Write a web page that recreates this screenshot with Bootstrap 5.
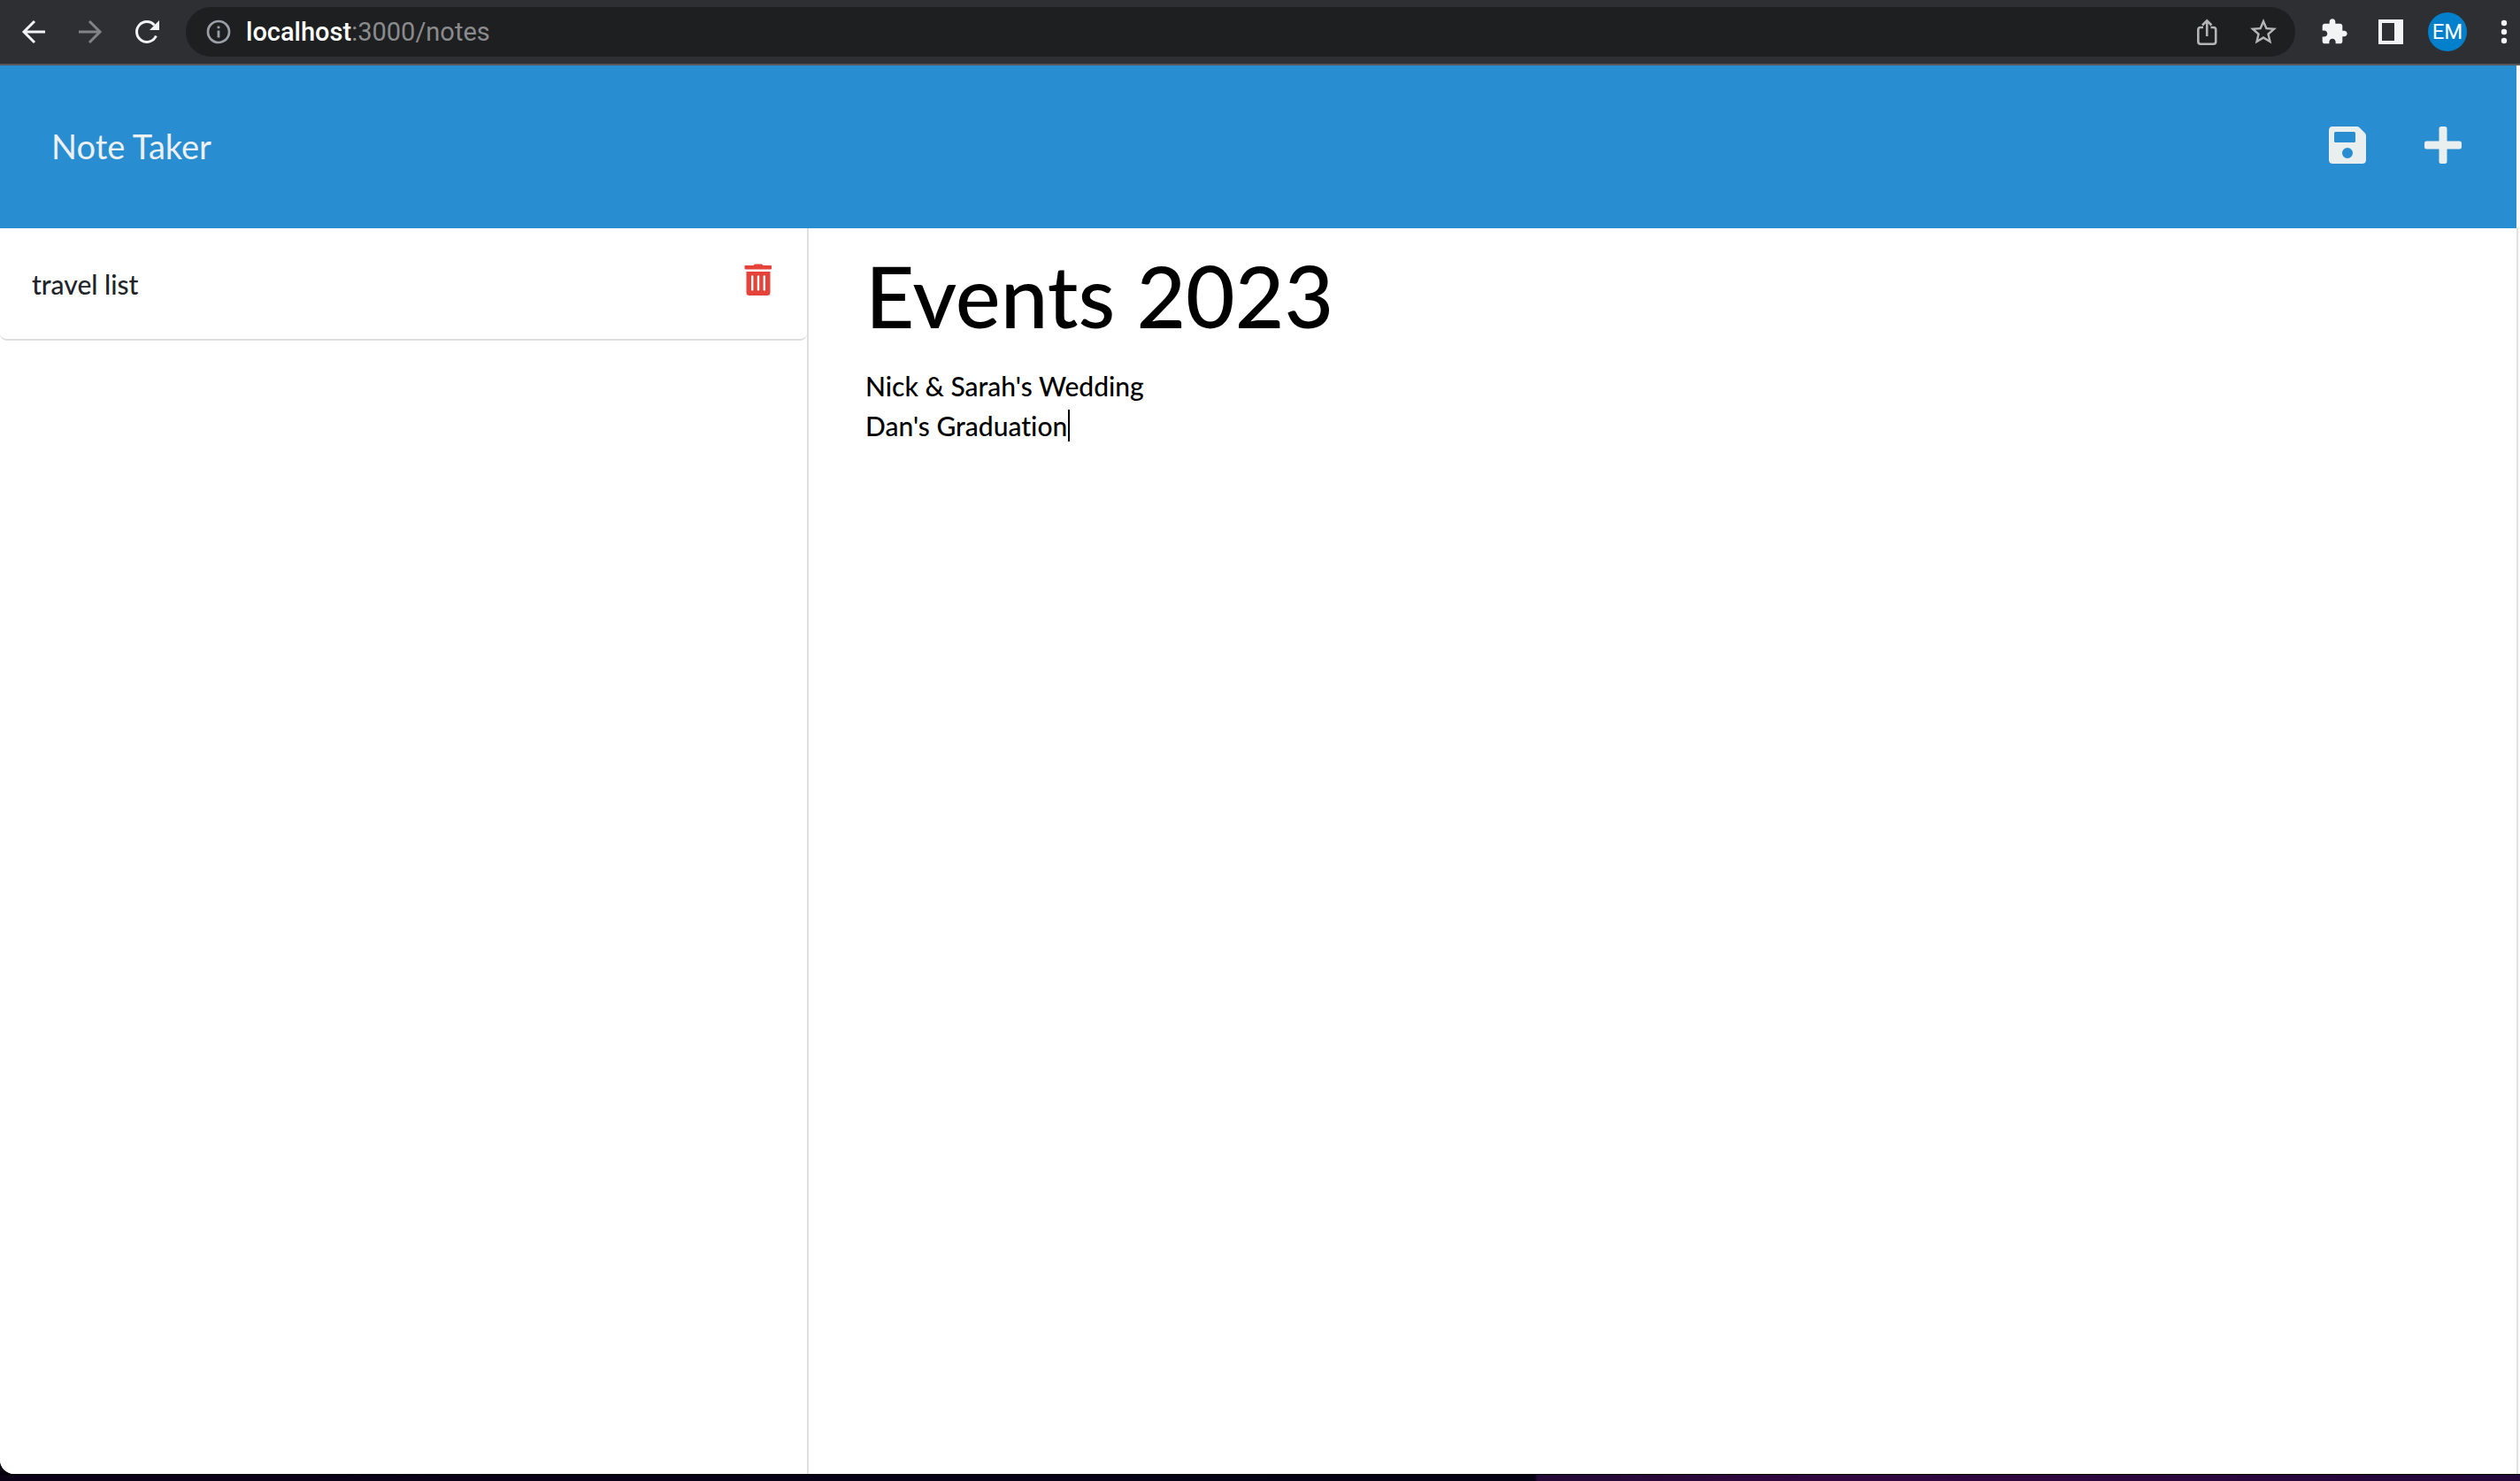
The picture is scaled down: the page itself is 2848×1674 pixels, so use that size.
<!DOCTYPE html>
<html lang="en">
<head>
<meta charset="utf-8">
<meta name="viewport" content="width=device-width, initial-scale=1">
<title>Note Taker</title>
<link rel="stylesheet" href="https://cdn.jsdelivr.net/npm/bootstrap@5.3.0/dist/css/bootstrap.min.css">
<style>
  body { font-family: Lato, "Liberation Sans", sans-serif; font-size: 30px; font-weight: 500; font-variant-ligatures: none; background: #fff; }
  svg { display: block; }
  .tool-bar { height: 74px; background: #2e2f33; border-bottom: 2px solid #58585b; padding-left: 6px; }
  .tool-btn { width: 64px; height: 64px; padding: 0; border: 0; background: none; display: flex; align-items: center; justify-content: center; color: #f1f3f4; }
  .tool-btn.dim { color: #828386; }
  .tool-btn.edge { width: 48px; margin-right: 2px; justify-content: flex-end; }
  .address { height: 56px; margin: 0 12px; padding: 0 4px 0 22px; border-radius: 28px; background: #1e1f21; color: #9aa0a6; font-family: Roboto, sans-serif; font-size: 29px; font-weight: 400; line-height: 56px; }
  .address .tool-btn { color: #b5b5b7; height: 56px; }
  .address a { color: #8a8b8d; text-decoration: none; margin-left: 16px; }
  .address strong { color: #fff; font-weight: 500; }
  .avatar { width: 44px; height: 44px; border-radius: 50%; background: #0280cb; color: #fff; font: 24px/44px Roboto, sans-serif; }
  .viewport-area { background: #08020f; }
  .page-area { background: #fff; border-right: 2px solid #e1e1e1; margin-right: 2px; }
  .gutter-bg { background: #fafafa; border-bottom-left-radius: 16px; overflow: hidden; }
  .masthead { height: 184px; background: #298dd2; padding: 0 41px 4px 58px; margin-right: -2px; border-right: 2px solid #fafafa; }
  .masthead .navbar-brand { color: #ecf0f1; font-size: 38px; font-weight: 400; margin: 2px 0 0; padding: 0; }
  .mast-btn { color: #e9eeef; border: 0; background: none; padding: 0 20px; }
  .mast-actions { gap: 24px; }
  .note-list { width: calc(32% + 4px); flex: none; border-right: 2px solid #dfdfdf; }
  .note-list .list-group-item { border: 0; border-bottom: 2px solid #dfdfdf; border-radius: 0 0 8px 8px; height: 127px; padding: 40px 39px 0 36px; line-height: 46px; color: #212529; }
  .note-btn { border: 0; background: none; padding: 0; color: #e54339; }
  .editor { padding: 24px 64px 0; }
  .editor input, .editor textarea { display: block; width: 100%; border: 0; outline: 0; padding: 0; background: none; color: #000; resize: none; font-weight: inherit; font-variant-ligatures: none; }
  .editor input { font-size: 96px; line-height: 104px; height: 104px; margin-bottom: 28px; }
  .editor textarea { font-size: 30px; line-height: 45px; height: 900px; }
  .caret { position: absolute; left: 229px; top: 49px; width: 2px; height: 36px; background: #000; }
  .desk { height: 8px; border-top: 1px solid #000; background: linear-gradient(90deg, #0b0218 0%, #050214 60.9%, #240a36 61%, #330840 73%, #24083a 100%); }
</style>
</head>
<body class="d-flex flex-column min-vh-100">
<nav class="tool-bar d-flex align-items-center" aria-label="Browser">
  <button class="tool-btn" aria-label="Back"><svg width="32" height="32" viewBox="0 0 32 32" fill="none" stroke="currentColor" stroke-width="3"><path d="M29 16H5M17 4 5 16l12 12"/></svg></button>
  <button class="tool-btn dim" aria-label="Forward"><svg width="32" height="32" viewBox="0 0 32 32" fill="none" stroke="currentColor" stroke-width="3"><path d="M3 16h24M15 4l12 12-12 12"/></svg></button>
  <button class="tool-btn" aria-label="Reload"><svg width="32" height="32" viewBox="0 0 32 32"><path d="M26.400 20.500A11.400 11.400 0 1 1 24.500 8.500" fill="none" stroke="currentColor" stroke-width="3"/><path d="M30 3v11H19z" fill="currentColor"/></svg></button>
  <div class="address d-flex align-items-center flex-grow-1">
    <svg width="30" height="30" viewBox="0 0 30 30"><circle cx="15" cy="15" r="12" fill="none" stroke="currentColor" stroke-width="2.7"/><path d="M13.600 13.500h2.800v8h-2.800zM13.600 8.500h2.800v2.800h-2.800z" fill="currentColor"/></svg>
    <a href="#"><strong>localhost</strong>:3000/notes</a>
    <button class="tool-btn ms-auto" aria-label="Share"><svg width="32" height="32" viewBox="0 0 32 32" fill="none" stroke="currentColor" stroke-width="2.6"><path d="M12 11H9q-2.700 0-2.700 2.700V27q0 2.700 2.700 2.700h14.500q2.700 0 2.700-2.700V13.700Q26.200 11 23.500 11H20.500M16.200 21V4M11 8.500l5.200-5.200 5.200 5.200"/></svg></button>
    <button class="tool-btn" aria-label="Bookmark"><svg width="36" height="36" viewBox="0 0 24 24" fill="currentColor"><path d="M22 9.240l-7.190-.62L12 2 9.190 8.630 2 9.240l5.460 4.730L5.820 21 12 17.270 18.180 21l-1.630-7.030L22 9.240zM12 15.400l-3.760 2.270 1-4.280-3.320-2.880 4.380-.38L12 6.100l1.710 4.040 4.380.38-3.320 2.880 1 4.280L12 15.400z"/></svg></button>
  </div>
  <button class="tool-btn" aria-label="Extensions"><svg width="32" height="32" viewBox="0 0 24 24" fill="currentColor"><path d="M20.500 11H19V7c0-1.100-.9-2-2-2h-4V3.500C13 2.120 11.880 1 10.500 1S8 2.120 8 3.500V5H4c-1.100 0-1.990.9-1.990 2v3.800H3.500c1.490 0 2.700 1.210 2.700 2.700s-1.210 2.700-2.700 2.700H2V20c0 1.100.9 2 2 2h3.800v-1.500c0-1.490 1.210-2.700 2.700-2.700 1.490 0 2.700 1.210 2.700 2.700V22H17c1.100 0 2-.9 2-2v-4h1.500c1.380 0 2.500-1.120 2.500-2.500S21.880 11 20.500 11z"/></svg></button>
  <button class="tool-btn" aria-label="Side panel"><svg width="28" height="28" viewBox="0 0 28 28" fill="currentColor"><path fill-rule="evenodd" d="M0 0h28v28H0zM4 4v20h14V4z"/></svg></button>
  <button class="tool-btn" aria-label="Profile"><span class="avatar">EM</span></button>
  <button class="tool-btn edge" aria-label="Menu"><svg width="32" height="32" viewBox="0 0 32 32" fill="currentColor"><circle cx="16" cy="6" r="3.200"/><circle cx="16" cy="16" r="3.200"/><circle cx="16" cy="26" r="3.200"/></svg></button>
</nav>
<div class="viewport-area flex-grow-1 d-flex flex-column">
  <div class="gutter-bg flex-grow-1 d-flex flex-column">
    <div class="page-area flex-grow-1 d-flex flex-column">
      <header class="masthead navbar d-flex align-items-center justify-content-between">
        <a class="navbar-brand" href="#">Note Taker</a>
        <div class="mast-actions d-flex">
          <button class="mast-btn" aria-label="Save note"><svg width="44" height="44" viewBox="0 0 44 44" fill="currentColor"><path fill-rule="evenodd" d="M5 1h27.500q2 0 3.400 1.400l6 6Q43 9.600 43 11.500V38.500Q43 43 38.500 43H5.500Q1 43 1 38.500V5.500Q1 1 5 1zM8.500 7Q7 7 7 8.500v9Q7 19 8.500 19h21q1.500 0 1.500-1.500v-9Q31 7 29.500 7zM22 25a6 6 0 1 0 0 12 6 6 0 0 0 0-12z"/></svg></button>
          <button class="mast-btn" aria-label="New note"><svg width="44" height="44" viewBox="0 0 44 44" fill="currentColor"><path d="M20 1h4q2.500 0 2.500 2.500v14h14Q43 17.500 43 20v4q0 2.500-2.500 2.500h-14v14Q26.500 43 24 43h-4q-2.500 0-2.500-2.500v-14h-14Q1 26.500 1 24v-4q0-2.500 2.500-2.500h14v-14Q17.500 1 20 1z"/></svg></button>
        </div>
      </header>
      <main class="d-flex flex-grow-1">
        <aside class="note-list">
          <ul class="list-group">
            <li class="list-group-item d-flex justify-content-between align-items-start">
              <span>travel list</span>
              <button class="note-btn" aria-label="Delete note"><svg width="32" height="36" viewBox="0 0 32 36" fill="currentColor"><path d="M10.500 2 12 .4h8L21.500 2H30q1 0 1 1v2.500q0 1-1 1H1.500q-1 0-1-1V3q0-1 1-1z"/><path fill-rule="evenodd" d="M2.500 9h27v23.500q0 3.500-3.500 3.500H6q-3.500 0-3.500-3.500zM9.200 13.200q-1.200 0-1.200 1.200v15q0 1.200 1.200 1.200t1.200-1.200v-15q0-1.200-1.200-1.200zm6.800 0q-1.200 0-1.200 1.200v15q0 1.200 1.200 1.200t1.200-1.200v-15q0-1.200-1.200-1.200zm6.800 0q-1.200 0-1.200 1.200v15q0 1.200 1.200 1.200t1.200-1.200v-15q0-1.200-1.200-1.200z"/></svg></button>
            </li>
          </ul>
        </aside>
        <section class="editor flex-grow-1">
          <input type="text" aria-label="Note title" value="Events 2023">
          <div class="position-relative">
            <textarea aria-label="Note text" spellcheck="false">Nick &amp; Sarah's Wedding
Dan's Graduation</textarea>
            <span class="caret"></span>
          </div>
        </section>
      </main>
    </div>
  </div>
</div>
<div class="desk"></div>
<script src="https://cdn.jsdelivr.net/npm/bootstrap@5.3.0/dist/js/bootstrap.bundle.min.js"></script>
</body>
</html>
